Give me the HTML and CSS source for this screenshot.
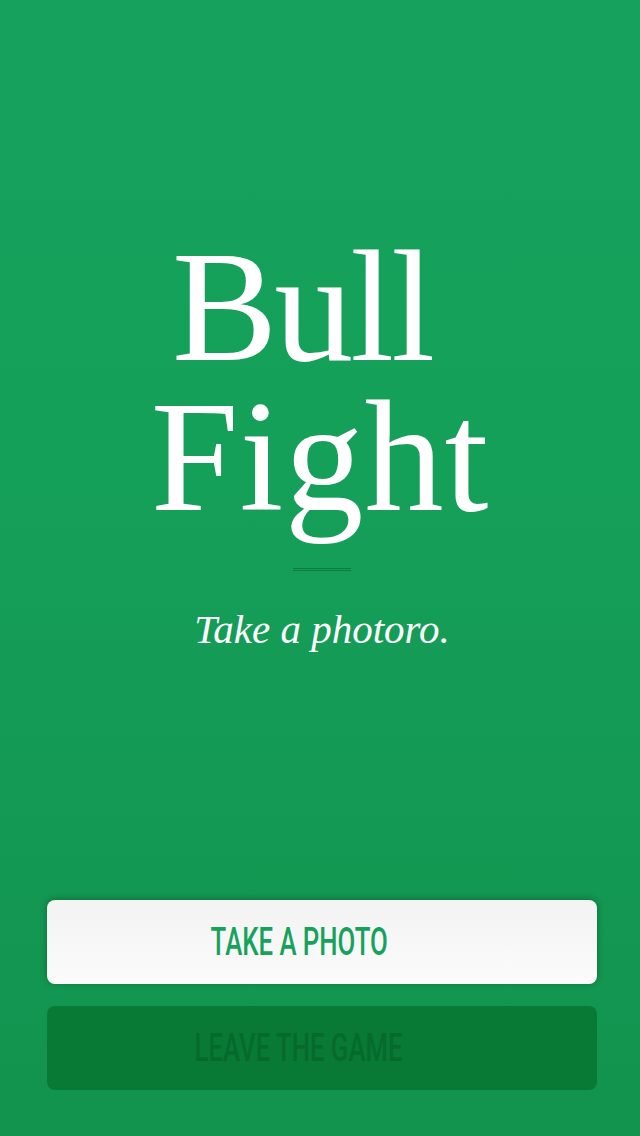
FILE: index.html
```html
<!DOCTYPE html>
<html>
<head>
<meta charset="utf-8">
<link rel="stylesheet" href="styles.css">
</head>
<body>
<div class="screen">
  <div class="hero">
    <h1 class="title"><span class="line line-bull">Bull</span><span class="line line-fight">Fight</span></h1>
    <div class="divider"></div>
    <p class="tagline">Take a photoro.</p>
  </div>
  <div class="actions">
    <button class="btn btn-primary"><span class="btn-label">TAKE A PHOTO</span></button>
    <button class="btn btn-secondary"><span class="btn-label">LEAVE THE GAME</span></button>
  </div>
</div>
</body>
</html>
```
FILE: styles.css
```css
html, body {
  margin: 0;
  padding: 0;
}
body {
  width: 640px;
  height: 1136px;
  overflow: hidden;
}
.screen {
  width: 640px;
  height: 1136px;
  background: linear-gradient(to bottom, #16a25c 0%, #15a05a 40%, #12934e 100%);
  display: flex;
  flex-direction: column;
  box-sizing: border-box;
  padding: 0 43px 46px 47px;
}
.hero {
  flex: 1;
  display: flex;
  flex-direction: column;
  align-items: center;
  padding-top: 232px;
}
.title {
  margin: 0;
  font-family: "Liberation Serif", "Times New Roman", serif;
  font-weight: normal;
  font-size: 158px;
  line-height: 150px;
  color: #ffffff;
  display: flex;
  flex-direction: column;
  align-items: center;
}
.line {
  display: block;
  height: 150px;
}
.line-bull {
  letter-spacing: -3px;
  padding-right: 40px;
}
.line-fight {
  letter-spacing: 1px;
  padding-right: 4px;
}
.divider {
  margin-top: 36px;
  width: 58px;
  height: 1px;
  border-top: 1px solid #0e7a3f;
  border-bottom: 1px solid #0e7a3f;
}
.tagline {
  margin: 34px 0 0;
  font-family: "Liberation Serif", "Times New Roman", serif;
  font-style: italic;
  font-size: 41px;
  line-height: 48px;
  color: #ffffff;
}
.actions {
  display: flex;
  flex-direction: column;
  gap: 22px;
}
.btn {
  height: 84px;
  width: 550px;
  border: none;
  border-radius: 8px;
  display: flex;
  align-items: center;
  justify-content: center;
  padding: 0 46px 0 0;
  cursor: pointer;
}
.btn-primary {
  background: linear-gradient(to bottom, #f3f3f3, #fbfbfb);
  box-shadow: 0 -1px 6px rgba(0, 60, 20, 0.45);
  color: #16a25c;
}
.btn-secondary {
  background: #087a35;
  color: #066a2c;
}
.btn-label {
  display: inline-block;
  font-family: Roboto, "Liberation Sans", sans-serif;
  font-weight: 500;
  font-size: 39px;
  line-height: 39px;
  transform: scaleX(0.66);
  white-space: nowrap;
}
```
